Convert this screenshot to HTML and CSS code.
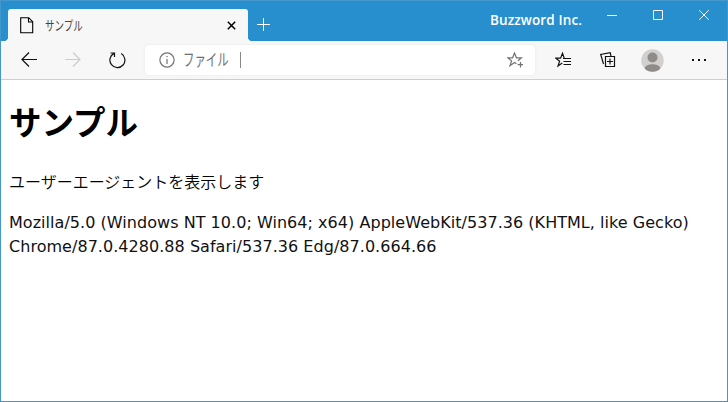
FILE: index.html
```html
<!DOCTYPE html>
<html lang="ja">
<head>
<meta charset="utf-8">
<title>サンプル</title>
<link rel="stylesheet" href="styles.css">
</head>
<body>
<div class="window">
  <header class="titlebar">
    <div class="tab">
      <svg class="page-icon" width="14" height="17" viewBox="0 0 14 17"><path d="M.7.7h8l4 4v11H.7zM8.5 1v4h4" fill="none" stroke="#000" stroke-width="1.1"/></svg>
      <span class="tab-title">サンプル</span>
      <svg class="tab-close" width="9" height="9" viewBox="0 0 9 9"><path d="M.8.8l7.4 7.4M8.2.8L.8 8.2" stroke="#000" stroke-width="1.5"/></svg>
    </div>
    <svg class="new-tab" width="13" height="13" viewBox="0 0 13 13"><path d="M6.5 0v13M0 6.5h13" stroke="#fff"/></svg>
    <span class="org">Buzzword Inc.</span>
    <div class="controls">
      <svg width="10" height="10" viewBox="0 0 10 10"><path d="M0 5.5h10"/></svg>
      <svg width="10" height="10" viewBox="0 0 10 10"><path d="M.5.5h9v9h-9z"/></svg>
      <svg width="10" height="10" viewBox="0 0 10 10"><path d="M.2.2l9.6 9.6M9.8.2L.2 9.8"/></svg>
    </div>
  </header>
  <nav class="toolbar">
    <svg class="back" width="16" height="16" viewBox="0 0 16 16"><path d="M16 7.5H1M8 .5l-7 7 7 7"/></svg>
    <svg class="forward" width="16" height="16" viewBox="0 0 16 16"><path d="M0 7.5h15M8 .5l7 7-7 7"/></svg>
    <svg class="reload" width="17" height="17" viewBox="0 0 17 17"><path d="M5 1.4A7.5 7.5 0 1 0 12.2 1.6M1.5 1H5.5V5"/></svg>
    <div class="address">
      <svg class="info" width="16" height="16" viewBox="0 0 16 16"><circle cx="8" cy="8" r="7.1"/><path d="M8 7v5M8 4v1.3"/></svg>
      <span class="scheme">ファイル</span>
      <span class="divider"></span>
      <svg class="star" width="17" height="16" viewBox="0 0 17 16"><path d="M9.5 11.8L7.5 10.4 3 13.7 4.6 8.9.8 5.8H5.6L7.5 1 9.4 5.8h5l-3.5 3M13.5 10v5.5M10.7 12.7H16"/></svg>
    </div>
    <svg class="favorites" width="17" height="16" viewBox="0 0 17 16"><path d="M7.3 11L3 14 4.6 9.2.8 6.1H5.6L7.5 1.2 9.2 6.1M8 6.5h8M8.5 9.5h7.5M8.5 12.5h7.5"/></svg>
    <svg class="collections" width="16" height="16" viewBox="0 0 16 16"><path d="M5.5 4.5h9v10h-9zM10 6.5v6M7 9.5h6M3.5 12L.7 2.5 10.2.7 11 4"/></svg>
    <svg class="avatar" width="23" height="23" viewBox="0 0 23 23"><defs><clipPath id="disc"><circle cx="11.5" cy="11.5" r="11.2"/></clipPath></defs><circle cx="11.5" cy="11.5" r="11.2" fill="#d2d0ce"/><g fill="#8f8b88" clip-path="url(#disc)"><circle cx="11.5" cy="8.5" r="5"/><ellipse cx="11.5" cy="20" rx="8" ry="4.8"/></g></svg>
    <svg class="more" width="14" height="2" viewBox="0 0 14 2"><path d="M0 1h2M6 1h2M12 1h2" stroke-width="2"/></svg>
  </nav>
  <main class="page">
    <h1>サンプル</h1>
    <p class="intro">ユーザーエージェントを表示します</p>
    <p class="agent">Mozilla/5.0 (Windows NT 10.0; Win64; x64) AppleWebKit/537.36 (KHTML, like Gecko) Chrome/87.0.4280.88 Safari/537.36 Edg/87.0.664.66</p>
  </main>
</div>
</body>
</html>
```
FILE: styles.css
```css
* { box-sizing: border-box; }
body { margin: 0; background: #fff; font-family: "DejaVu Sans", "Noto Sans CJK JP", sans-serif; }
svg { display: block; flex: none; fill: none; }
.window { width: 728px; height: 402px; border: 1px solid #4397cb; overflow: hidden; }
.titlebar { height: 40px; background: #288fcf; display: flex; align-items: flex-start; }
.tab { position: relative; width: 240px; height: 32px; margin: 8px 0 0 7px; padding: 0 12px; background: #f7f7f7; border-radius: 3px 3px 0 0; display: flex; align-items: center; }
.tab::before, .tab::after { content: ""; position: absolute; bottom: 0; width: 3px; height: 3px; }
.tab::before { left: -3px; background: radial-gradient(circle at 0 0, transparent 2.5px, #f7f7f7 3px); }
.tab::after { right: -3px; background: radial-gradient(circle at 100% 0, transparent 2.5px, #f7f7f7 3px); }
.tab-title { width: 48px; margin-left: 11px; font: 13px/18px "Noto Sans CJK JP", sans-serif; color: #444; white-space: nowrap; transform: scaleX(.73); transform-origin: left; }
.tab-close { margin-left: auto; }
.new-tab { margin: 17px 0 0 9px; }
.org { margin: 9px 0 0 220px; width: 94px; font: 600 13.5px/20px "Open Sans", sans-serif; color: #fff; white-space: nowrap; letter-spacing: .12px; }
.controls { display: flex; gap: 36px; margin: 9px 0 0 23px; stroke: #fff; stroke-width: 1; }
.toolbar { height: 39px; background: #f7f7f7; border-bottom: 1px solid #cecece; display: flex; align-items: center; stroke: #111; stroke-width: 1.2; }
.back { margin-left: 20px; }
.forward { margin-left: 28px; stroke: #ccc; }
.reload { margin-left: 28px; }
.address { width: 390px; height: 30px; margin-left: 19px; padding: 0 11px 0 14px; background: #fff; border-radius: 4px; box-shadow: 0 0 3px #e8e8e8; display: flex; align-items: center; stroke: #737373; }
.scheme { width: 56px; margin-left: 8px; font: 16.5px/22px "Noto Sans CJK JP", sans-serif; color: #707070; white-space: nowrap; transform: scaleX(.69); transform-origin: left; margin-bottom: 2px; }
.divider { width: 1px; height: 16px; background: #888; margin-left: 1px; }
.star { margin-left: auto; }
.favorites { margin-left: 20px; }
.collections { margin-left: 28px; }
.avatar { margin-left: 25px; stroke: none; }
.more { margin-left: 28px; }
.page { padding: 0 8px; color: #000; }
h1 { margin: 17px 0 0; font: 700 32.5px/48px "Noto Sans CJK JP", sans-serif; white-space: nowrap; }
.intro { margin: 24px 0 0; font: 350 16px/24px "Noto Sans CJK JP", sans-serif; white-space: nowrap; }
.agent { margin: 18px 0 0; font-size: 16px; line-height: 24px; letter-spacing: .04px; color: #111; }
```
